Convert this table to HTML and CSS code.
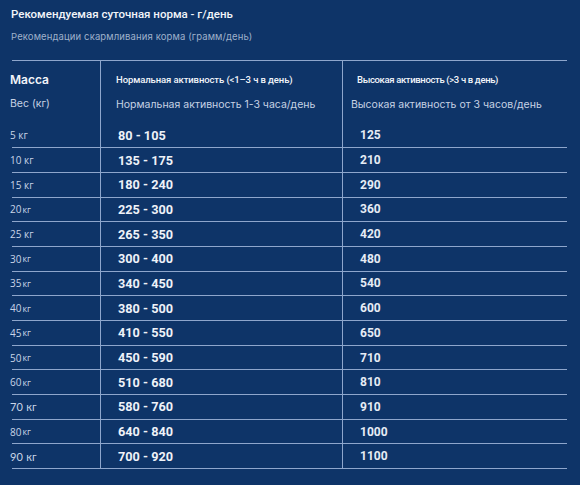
FILE: index.html
```html
<!DOCTYPE html>
<html lang="ru">
<head>
<meta charset="utf-8">
<title>Рекомендуемая суточная норма</title>
<link rel="stylesheet" href="styles.css">
</head>
<body>
<div class="page">
  <h1 class="title">Рекомендуемая суточная норма - г/день</h1>
  <p class="subtitle">Рекомендации скармливания корма (грамм/день)</p>
  <div class="table">
    <div class="row head">
      <div class="cell c1">
        <div class="h-main">Масса</div>
        <div class="h-sub">Вес (кг)</div>
      </div>
      <div class="cell c2">
        <div class="h-small loose">Нормальная активность (&lt;1–3 ч в день)</div>
        <div class="h-sub">Нормальная активность 1-3 часа/день</div>
      </div>
      <div class="cell c3">
        <div class="h-small">Высокая активность (&gt;3 ч в день)</div>
        <div class="h-sub shift">Высокая активность от 3 часов/день</div>
      </div>
    </div>
    <div class="row"><div class="cell c1 w">5 кг</div><div class="cell c2 v">80 - 105</div><div class="cell c3 v2">125</div></div>
    <div class="row"><div class="cell c1 w">10 кг</div><div class="cell c2 v">135 - 175</div><div class="cell c3 v2">210</div></div>
    <div class="row"><div class="cell c1 w">15 кг</div><div class="cell c2 v">180 - 240</div><div class="cell c3 v2">290</div></div>
    <div class="row"><div class="cell c1 w">20 <span class="u">кг</span></div><div class="cell c2 v">225 - 300</div><div class="cell c3 v2">360</div></div>
    <div class="row"><div class="cell c1 w">25 кг</div><div class="cell c2 v">265 - 350</div><div class="cell c3 v2">420</div></div>
    <div class="row"><div class="cell c1 w">30 <span class="u">кг</span></div><div class="cell c2 v">300 - 400</div><div class="cell c3 v2">480</div></div>
    <div class="row"><div class="cell c1 w">35 <span class="u">кг</span></div><div class="cell c2 v">340 - 450</div><div class="cell c3 v2">540</div></div>
    <div class="row"><div class="cell c1 w">40 <span class="u">кг</span></div><div class="cell c2 v">380 - 500</div><div class="cell c3 v2">600</div></div>
    <div class="row"><div class="cell c1 w">45 <span class="u">кг</span></div><div class="cell c2 v">410 - 550</div><div class="cell c3 v2">650</div></div>
    <div class="row"><div class="cell c1 w">50 <span class="u">кг</span></div><div class="cell c2 v">450 - 590</div><div class="cell c3 v2">710</div></div>
    <div class="row"><div class="cell c1 w">60 <span class="u">кг</span></div><div class="cell c2 v">510 - 680</div><div class="cell c3 v2">810</div></div>
    <div class="row"><div class="cell c1 w wide">70 кг</div><div class="cell c2 v">580 - 760</div><div class="cell c3 v2">910</div></div>
    <div class="row"><div class="cell c1 w">80 <span class="u">кг</span></div><div class="cell c2 v">640 - 840</div><div class="cell c3 v2">1000</div></div>
    <div class="row"><div class="cell c1 w wide">90 кг</div><div class="cell c2 v">700 - 920</div><div class="cell c3 v2">1100</div></div>
  </div>
</div>
</body>
</html>
```
FILE: styles.css
```css
html, body {
  margin: 0;
  padding: 0;
  background: #0e3468;
}
body {
  width: 580px;
  height: 485px;
  overflow: hidden;
  font-family: Inter, "Noto Sans", sans-serif;
  color: #eef2f8;
}
.page {
  padding: 6px 0 0 11px;
}
.title {
  margin: 0;
  font-family: Roboto, sans-serif;
  font-size: 11.5px;
  line-height: 16px;
  font-weight: 500;
  color: #f2f5fa;
}
.subtitle {
  margin: 8px 0 0;
  font-size: 9.5px;
  line-height: 14px;
  letter-spacing: 0.12px;
  color: #9fb1cb;
}
.table {
  margin: 16px 0 0 1px;
  width: 555px;
  border-top: 1px solid #8ea6cc;
}
.row {
  display: grid;
  grid-template-columns: 88px 242px 225px;
  height: 24.7px;
  box-sizing: border-box;
  border-bottom: 1px solid #8ea6cc;
}
.row.head {
  height: 62.5px;
  border-bottom: none;
}
.cell {
  display: flex;
  align-items: center;
  box-sizing: border-box;
}
.c2, .c3 {
  border-left: 1px solid #8ea6cc;
}
.head .cell {
  flex-direction: column;
  align-items: flex-start;
  justify-content: flex-start;
  padding-top: 11px;
}
.head .c1 {
  margin-left: -2px;
}
.head .c2 {
  padding-left: 15px;
}
.head .c3 {
  padding-left: 14px;
}
.h-main {
  font-size: 12px;
  line-height: 16px;
  font-weight: 600;
  color: #f2f5fa;
}
.h-small {
  font-family: Roboto, sans-serif;
  font-size: 9.5px;
  line-height: 16px;
  font-weight: 500;
  letter-spacing: -0.35px;
  color: #f2f5fa;
}
.h-small.loose {
  letter-spacing: -0.1px;
}
.h-sub {
  margin-top: 9px;
  font-size: 10.5px;
  line-height: 16px;
  color: #c6d2e4;
}
.c1 .h-sub {
  margin-top: 8px;
}
.h-sub.shift {
  margin-left: -6px;
}
.w {
  margin-left: -2px;
  font-family: "Open Sans", sans-serif;
  font-size: 10px;
  color: #c9d5e7;
}
.w .u {
  font-size: 9px;
  margin-left: 1px;
}
.w.wide {
  font-family: Lato, sans-serif;
  font-size: 11px;
  letter-spacing: 0.2px;
}
.v {
  padding-left: 17px;
  font-family: Roboto, sans-serif;
  font-size: 12.7px;
  font-weight: 700;
  color: #eef2f8;
}
.v2 {
  padding-left: 17px;
  font-family: Roboto, sans-serif;
  font-size: 12px;
  font-weight: 700;
  color: #e6ecf5;
}
```
